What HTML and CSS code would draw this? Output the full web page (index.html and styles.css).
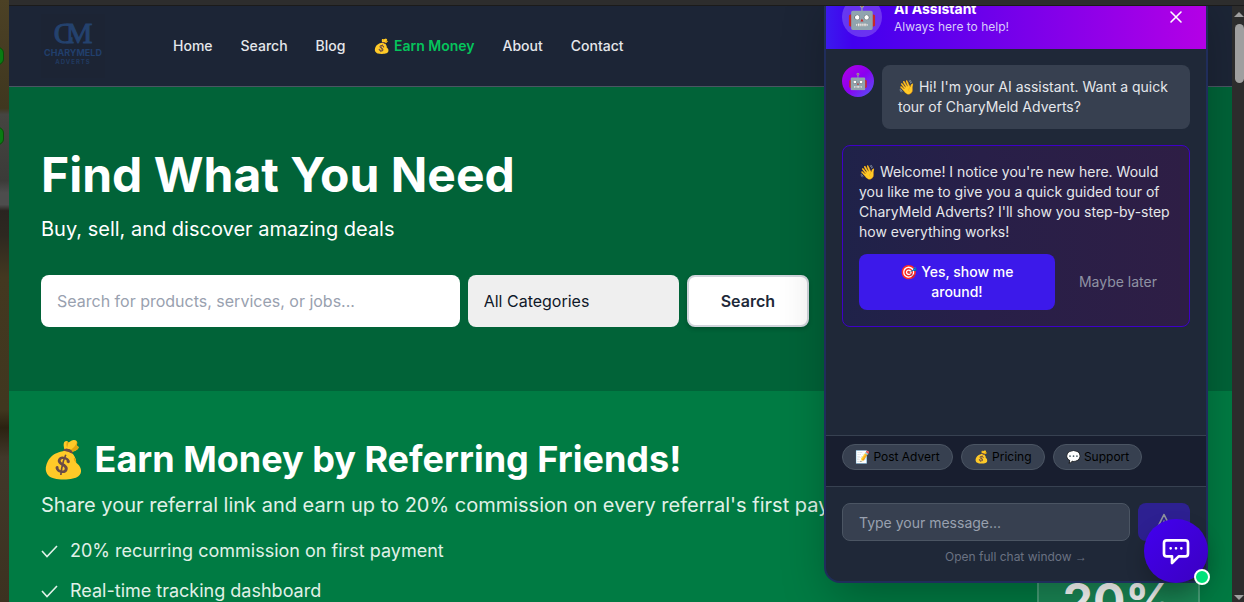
FILE: index.html
```html
<!DOCTYPE html>
<html lang="en">
<head>
    <meta charset="UTF-8">
    <meta name="viewport" content="width=device-width, initial-scale=1.0">
    <title>CharyMeld Adverts</title>
    <link rel="stylesheet" href="styles.css">
</head>
<body>
    <div class="desktop">
        <span class="desktop-dot dot-first"></span>
        <span class="desktop-dot dot-second"></span>
    </div>

    <div class="window">
        <div class="titlebar"></div>
        <div class="viewport">
            <div class="page">
                <header class="navbar">
                    <a href="#" class="logo" aria-label="CharyMeld Adverts">
                        <span class="logo-mark"><span>C</span><span class="logo-m">M</span></span>
                        <span class="logo-name">CHARYMELD</span>
                        <span class="logo-sub">ADVERTS</span>
                    </a>
                    <nav class="nav-links">
                        <a href="#">Home</a>
                        <a href="#">Search</a>
                        <a href="#">Blog</a>
                        <a href="#" class="earn">💰 Earn Money</a>
                        <a href="#">About</a>
                        <a href="#">Contact</a>
                    </nav>
                </header>

                <section class="hero">
                    <h1>Find What You Need</h1>
                    <p>Buy, sell, and discover amazing deals</p>
                    <form class="search-form">
                        <input type="text" aria-label="Search" placeholder="Search for products, services, or jobs...">
                        <select aria-label="Category">
                            <option>All Categories</option>
                        </select>
                        <button type="button">Search</button>
                    </form>
                </section>

                <section class="referral">
                    <div class="referral-text">
                        <h2>💰 Earn Money by Referring Friends!</h2>
                        <p>Share your referral link and earn up to 20% commission on every referral's first payment</p>
                        <ul>
                            <li>
                                <svg width="18" height="18" viewBox="0 0 18 18" fill="none" stroke="currentColor" stroke-width="1.6"><path d="M1 9l5 5.500L16 4"/></svg>
                                20% recurring commission on first payment
                            </li>
                            <li>
                                <svg width="18" height="18" viewBox="0 0 18 18" fill="none" stroke="currentColor" stroke-width="1.6"><path d="M1 9l5 5.500L16 4"/></svg>
                                Real-time tracking dashboard
                            </li>
                        </ul>
                    </div>
                    <div class="rate-card">20%</div>
                </section>

                <!-- Chat widget -->
                <aside class="chat">
                    <div class="chat-header">
                        <span class="header-avatar">🤖</span>
                        <div class="header-text">
                            <h3>AI Assistant</h3>
                            <p>Always here to help!</p>
                        </div>
                        <button type="button" class="close-button" aria-label="Close">
                            <svg width="20" height="20" viewBox="0 0 20 20" fill="none" stroke="currentColor" stroke-width="1.6" stroke-linecap="round"><path d="M5 5l10 10M15 5L5 15"/></svg>
                        </button>
                    </div>

                    <div class="messages">
                        <div class="message">
                            <span class="message-avatar">🤖</span>
                            <p class="bubble">👋 Hi! I'm your AI assistant. Want a quick tour of CharyMeld Adverts?</p>
                        </div>
                        <div class="offer">
                            <p>👋 Welcome! I notice you're new here. Would you like me to give you a quick guided tour of CharyMeld Adverts? I'll show you step-by-step how everything works!</p>
                            <div class="offer-actions">
                                <button type="button" class="accept">🎯 Yes, show me around!</button>
                                <button type="button" class="later">Maybe later</button>
                            </div>
                        </div>
                    </div>

                    <div class="quick-actions">
                        <button type="button">📝 Post Advert</button>
                        <button type="button">💰 Pricing</button>
                        <button type="button">💬 Support</button>
                    </div>

                    <div class="composer">
                        <form class="composer-row">
                            <input type="text" aria-label="Message" placeholder="Type your message...">
                            <button type="button" aria-label="Send">
                                <svg width="20" height="20" viewBox="0 0 24 24" fill="none" stroke="currentColor" stroke-width="2" stroke-linecap="round" stroke-linejoin="round"><path d="M12 19l9 2-9-18-9 18 9-2zm0 0v-8"/></svg>
                            </button>
                        </form>
                        <a href="#">Open full chat window <span class="link-arrow">→</span></a>
                    </div>
                </aside>

                <button type="button" class="chat-toggle" aria-label="Chat">
                    <svg width="32" height="32" viewBox="0 0 24 24" fill="none" stroke="currentColor" stroke-width="2" stroke-linecap="round" stroke-linejoin="round"><path d="M8 10h.01M12 10h.01M16 10h.01M9 16H5a2 2 0 01-2-2V6a2 2 0 012-2h14a2 2 0 012 2v8a2 2 0 01-2 2h-5l-5 5v-5z"/></svg>
                    <span class="online"></span>
                </button>
            </div>

            <div class="scrollbar">
                <span class="arrow-up"></span>
                <span class="thumb"></span>
                <span class="arrow-down"></span>
            </div>
        </div>
    </div>
</body>
</html>
```

FILE: styles.css
```css
* { box-sizing: border-box; }
body {
    margin: 0;
    height: 100vh;
    display: flex;
    overflow: hidden;
    background-color: #2b2b2b;
    font-family: Inter, "Noto Sans", sans-serif;
}
h1, h2, h3, p, ul { margin: 0; padding: 0; }
a { text-decoration: none; }
button, input, select {
    font: inherit;
    margin: 0;
}
button { cursor: pointer; }

/* Window frame */
.desktop {
    position: relative;
    flex: 0 0 9px;
    overflow: hidden;
    background: linear-gradient(#4c4125, #3f371f 18%, #454541 19%, #3b3b38 30%, #4d4d4d 32%, #4d4d4d 34%, #292420 35%, #2d2820 39%, #433820 46%, #40371f 68%, #2b2211 71%, #41382a 76%, #3c3220);
}
.desktop-dot {
    position: absolute;
    right: 5px;
    width: 18px;
    height: 18px;
    border: 1px solid #0a4d0a;
    border-radius: 6px;
    background-color: #087c12;
}
.dot-first { top: 47px; }
.dot-second { top: 127px; }
.window {
    flex: 1;
    min-width: 0;
    display: flex;
    flex-direction: column;
}
.titlebar {
    height: 6px;
    flex-shrink: 0;
    background-color: #2d2d2d;
    border-bottom: 1px solid #1b1b1b;
}
.viewport {
    flex: 1;
    min-height: 0;
    display: flex;
}
.page {
    position: relative;
    flex: 1;
    min-width: 0;
    overflow: hidden;
    background-color: #007b43;
}
.scrollbar {
    flex: 0 0 12px;
    display: flex;
    flex-direction: column;
    align-items: flex-end;
    padding: 6px 0 2px;
    background-color: #2c2c2c;
}
.arrow-up, .arrow-down {
    border: 5px solid transparent;
}
.arrow-up {
    border-top: 0;
    border-bottom-color: #9f9f9f;
}
.arrow-down {
    margin-top: auto;
    border-bottom: 0;
    border-top-color: #9f9f9f;
}
.thumb {
    width: 9px;
    height: 59px;
    margin-top: 7px;
    border-radius: 5px;
    background-color: #9f9f9f;
}

/* Navigation */
.navbar {
    display: flex;
    align-items: center;
    gap: 68px;
    height: 81px;
    padding: 0 32px;
    background-color: #1c2536;
    border-bottom: 1px solid #4b5563;
}
.logo {
    width: 64px;
    height: 64px;
    display: flex;
    flex-direction: column;
    align-items: center;
    padding-top: 4px;
    color: #24426e;
    background-color: #1c2434;
}
.logo-mark {
    display: flex;
    font-family: "Liberation Serif", serif;
    font-size: 30px;
    line-height: 30px;
    -webkit-text-stroke: 1px #24426e;
}
.logo-m { margin-left: -8px; }
.logo-name {
    font-size: 9px;
    line-height: 10px;
    font-weight: 700;
    color: #213f6c;
}
.logo-sub {
    font-size: 6px;
    line-height: 8px;
    font-weight: 700;
    letter-spacing: 1px;
    color: #213a60;
}
.nav-links {
    display: flex;
    gap: 28px;
    font-size: 14px;
    line-height: 20px;
    font-weight: 500;
}
.nav-links a { color: #e5e7eb; }
.nav-links .earn {
    color: #05c45c;
    font-weight: 600;
}

/* Hero */
.hero {
    padding: 64px 32px;
    background-color: #016338;
    color: white;
}
.hero h1 {
    font-size: 48px;
    line-height: 48px;
    font-weight: 700;
}
.hero p {
    margin: 16px 0 32px;
    font-size: 20px;
    line-height: 28px;
}
.search-form {
    display: flex;
    gap: 8px;
    max-width: 768px;
    height: 52px;
    font-size: 16px;
}
.search-form input {
    flex: 1;
    min-width: 0;
    padding: 0 16px;
    border: 0;
    border-radius: 8px;
    background-color: white;
}
.search-form input::placeholder { color: #99a1af; }
.search-form select {
    width: 211px;
    padding: 0 16px;
    appearance: none;
    border: 0;
    border-radius: 8px;
    background-color: #efefef;
    color: #101828;
}
.search-form button {
    padding: 0 32px;
    border: 2px solid #d1d5dc;
    border-radius: 8px;
    background-color: white;
    color: #1e2939;
    font-weight: 600;
    box-shadow: 0 2px 4px rgba(0, 0, 0, 0.2);
}

/* Referral banner */
.referral {
    display: flex;
    justify-content: space-between;
    padding: 48px 32px;
    color: white;
}
.referral-text { white-space: nowrap; }
.referral h2 {
    font-size: 36px;
    line-height: 40px;
    font-weight: 700;
}
.referral p {
    margin: 12px 0 16px;
    font-size: 20px;
    line-height: 28px;
    color: #e0f1e8;
}
.referral ul {
    display: flex;
    flex-direction: column;
    gap: 8px;
    list-style: none;
    font-size: 18px;
    line-height: 32px;
    color: #e0f1e8;
}
.referral li {
    display: flex;
    align-items: center;
    gap: 11px;
}
.rate-card {
    align-self: flex-start;
    margin-top: 112px;
    padding: 24px;
    border: 2px solid rgba(255, 255, 255, 0.2);
    border-radius: 12px;
    background-color: rgba(255, 255, 255, 0.1);
    font-size: 48px;
    line-height: 48px;
    font-weight: 700;
}

/* Chat widget */
.chat {
    position: absolute;
    right: 24px;
    bottom: 19px;
    width: 384px;
    height: 600px;
    display: flex;
    flex-direction: column;
    overflow: hidden;
    border: 2px solid #202d5b;
    border-radius: 16px;
    background-color: #1f2838;
    box-shadow: 0 20px 50px -8px rgba(0, 0, 0, 0.3);
    font-size: 14px;
    line-height: 20px;
    color: #e5e7eb;
}
.chat-header {
    display: flex;
    align-items: center;
    gap: 12px;
    padding: 12px 16px;
    background: linear-gradient(90deg, #3b1aee, #4200ee 7%, #b400e6);
    color: white;
}
.header-avatar {
    width: 40px;
    height: 40px;
    display: flex;
    align-items: center;
    justify-content: center;
    border-radius: 50%;
    background-color: rgba(255, 255, 255, 0.2);
    font-size: 24px;
}
.header-text { flex: 1; }
.header-text h3 {
    font-size: 14px;
    line-height: 20px;
    font-weight: 700;
}
.header-text p {
    font-size: 12px;
    line-height: 16px;
    color: #d8ccfb;
}
.close-button {
    display: flex;
    padding: 4px;
    border: 0;
    background: none;
    color: white;
}
.messages {
    flex: 1;
    display: flex;
    flex-direction: column;
    gap: 16px;
    padding: 16px;
}
.message {
    display: flex;
    gap: 8px;
}
.message-avatar {
    flex: 0 0 32px;
    height: 32px;
    display: flex;
    align-items: center;
    justify-content: center;
    border-radius: 50%;
    background: linear-gradient(135deg, #b400e6, #8a00f0 50%, #4f5cf5);
    font-size: 16px;
}
.bubble {
    flex: 1;
    padding: 12px 16px;
    border-radius: 8px;
    background-color: #374050;
}
.offer {
    padding: 16px;
    border: 1px solid #3e00c8;
    border-radius: 8px;
    background: linear-gradient(90deg, #1f2249, #281f48 40%, #2e1e45);
}
.offer-actions {
    display: flex;
    gap: 8px;
    margin-top: 12px;
}
.offer-actions button {
    padding: 8px 16px;
    border: 0;
    border-radius: 8px;
}
.accept {
    flex: 1;
    background-color: #3c19ea;
    color: white;
    font-weight: 500;
}
.later {
    background: none;
    color: #8f92a3;
}
.quick-actions {
    display: flex;
    gap: 8px;
    padding: 8px 16px 16px;
    border-top: 1px solid #374151;
    background-color: #181e2f;
}
.quick-actions button {
    padding: 4px 12px;
    border: 1px solid #4b5563;
    border-radius: 13px;
    background-color: #374050;
    color: black;
    font-size: 12px;
    line-height: 16px;
}
.composer {
    padding: 16px;
    border-top: 1px solid #374151;
    text-align: center;
}
.composer-row {
    display: flex;
    gap: 8px;
    margin-bottom: 8px;
}
.composer input {
    flex: 1;
    min-width: 0;
    height: 38px;
    padding: 8px 16px;
    border: 1px solid #4b5563;
    border-radius: 8px;
    background-color: #374050;
    color: white;
}
.composer input::placeholder { color: #99a1af; }
.composer button {
    display: flex;
    padding: 9px 16px;
    border: 0;
    border-radius: 8px;
    background-color: #3c19ea;
    color: white;
    opacity: 0.5;
}
.composer a {
    display: block;
    font-size: 12px;
    line-height: 16px;
    color: #6a7282;
}
.link-arrow { font-family: "Liberation Sans", sans-serif; }
.chat-toggle {
    position: absolute;
    right: 24px;
    bottom: 19px;
    width: 64px;
    height: 64px;
    display: flex;
    align-items: center;
    justify-content: center;
    border: 0;
    border-radius: 50%;
    background: linear-gradient(135deg, #4200f0, #3b00c0);
    color: white;
    box-shadow: 0 10px 20px rgba(0, 0, 0, 0.2);
}
.online {
    position: absolute;
    right: -2px;
    bottom: -2px;
    width: 16px;
    height: 16px;
    border: 2px solid white;
    border-radius: 50%;
    background-color: #00e27a;
}
```
